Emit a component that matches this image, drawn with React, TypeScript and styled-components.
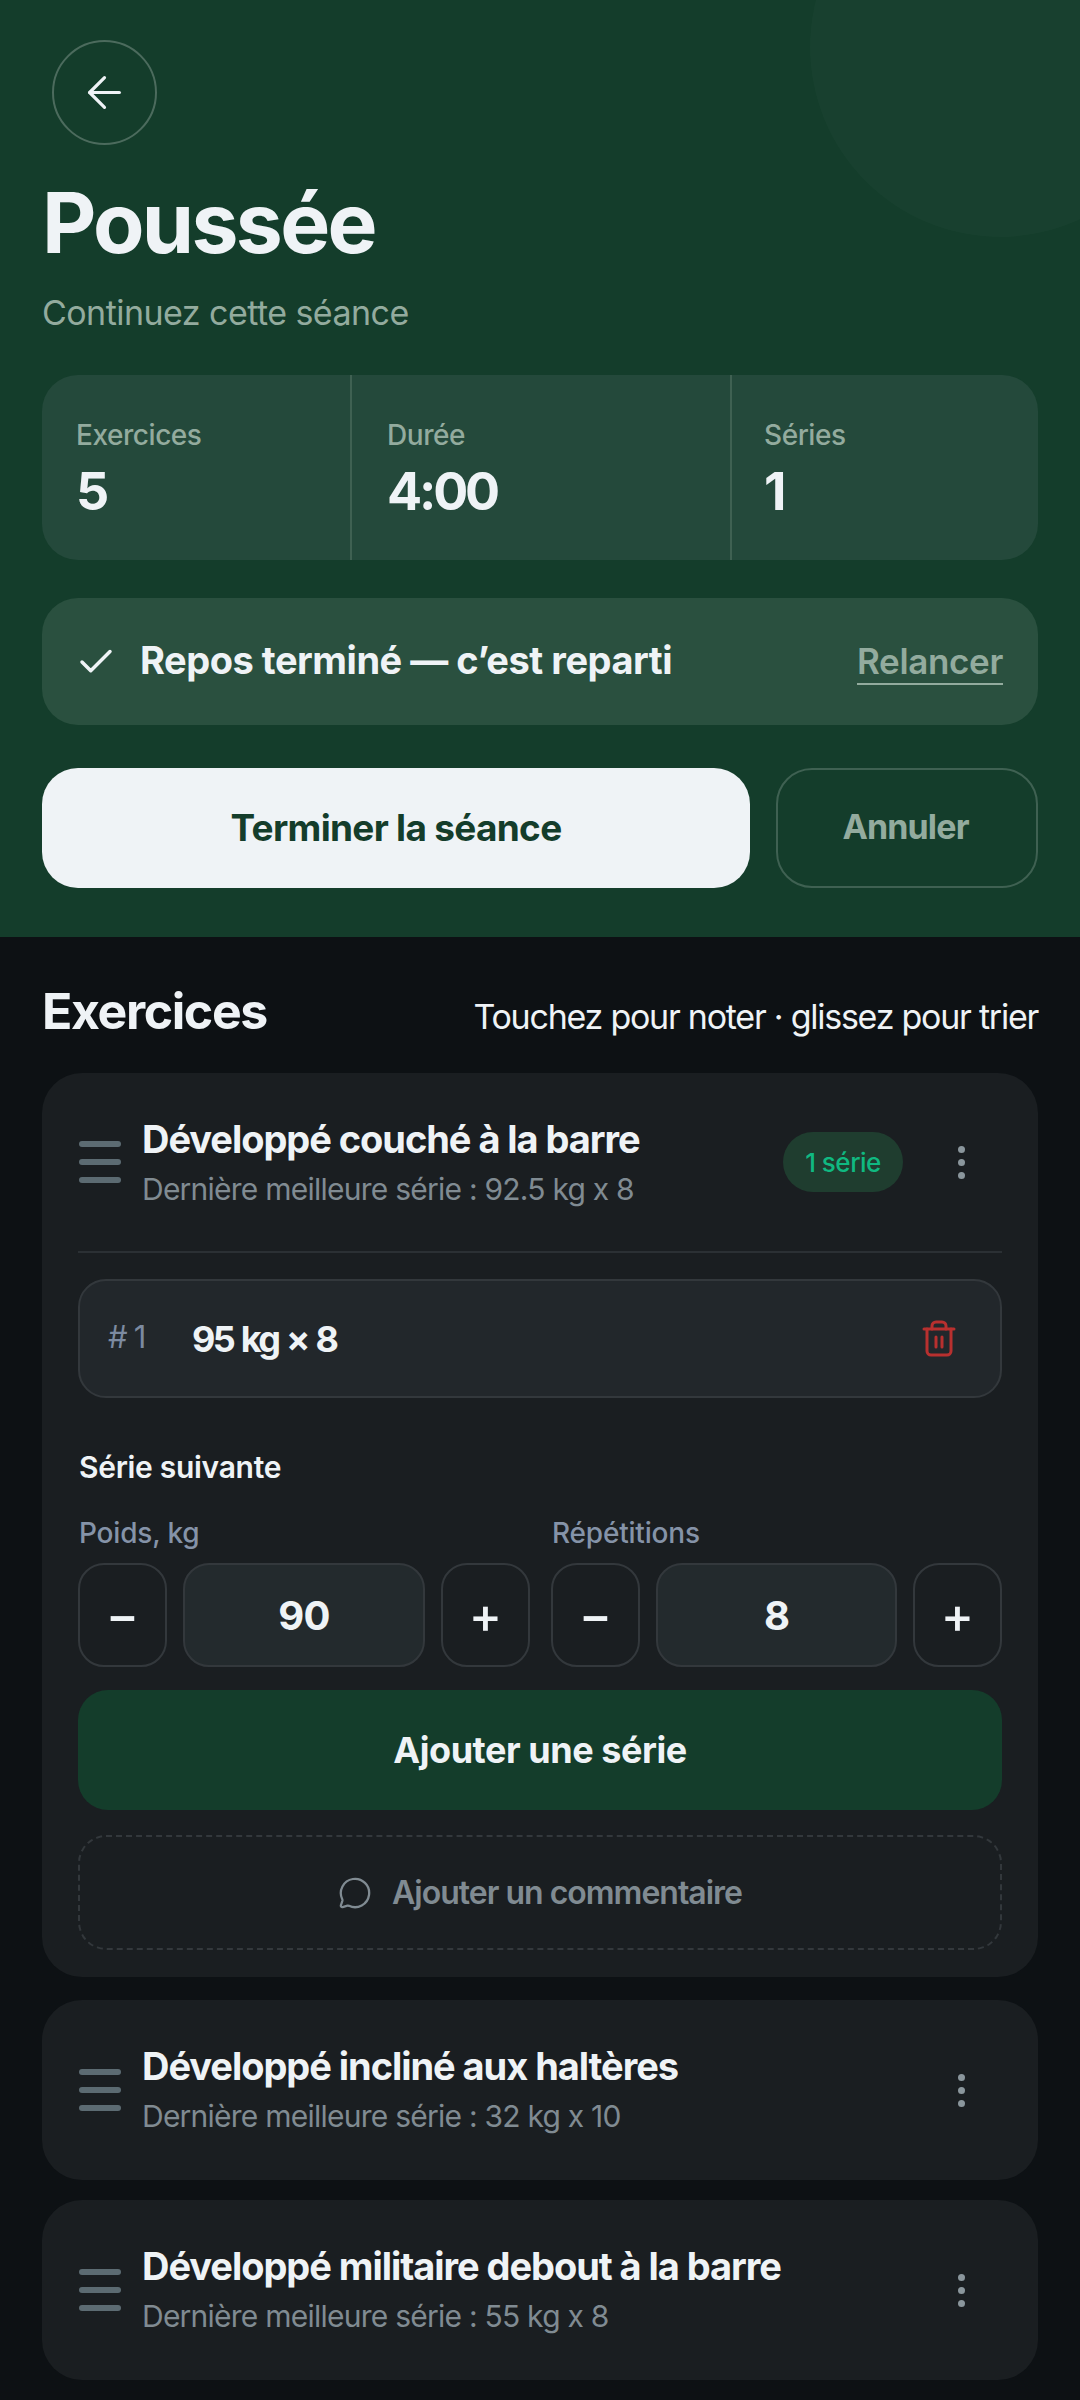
import React from "react";
import styled, { createGlobalStyle } from "styled-components";
import { ArrowLeft, Check, MessageCircle } from "lucide-react";

const Global = createGlobalStyle`
  html, body { margin: 0; padding: 0; background: #0d1114; }
  * { box-sizing: border-box; }
  body { font-family: Inter, "Noto Sans", sans-serif; width: 1080px; height: 2400px; overflow: hidden; }
`;

const Page = styled.div`
  width: 1080px;
  height: 2400px;
  overflow: hidden;
  background: #0d1114;
`;

const Hero = styled.header`
  position: relative;
  overflow: hidden;
  height: 937px;
  padding: 40px 42px 0;
  background: #143d2b;
  color: #eff3f6;
`;

const HeroCircle = styled.div`
  position: absolute;
  left: 810px;
  top: -143px;
  width: 380px;
  height: 380px;
  border-radius: 50%;
  background: rgba(255, 255, 255, 0.02);
`;

const BackButton = styled.button`
  display: flex;
  align-items: center;
  justify-content: center;
  width: 105px;
  height: 105px;
  margin-left: 10px;
  padding: 0;
  border: 2px solid rgba(255, 255, 255, 0.24);
  border-radius: 50%;
  background: transparent;
  color: #eff3f6;
`;

const Title = styled.h1`
  margin: 28px 0 0;
  font-size: 84px;
  line-height: 100px;
  font-weight: 700;
  letter-spacing: -2.7px;
`;

const Subtitle = styled.p`
  margin: 18px 0 0;
  font-size: 34px;
  line-height: 44px;
  font-weight: 400;
  letter-spacing: -0.55px;
  color: #93ab9e;
`;

const Stats = styled.section`
  display: grid;
  grid-template-columns: 308px 380px 1fr;
  height: 185px;
  margin-top: 40px;
  border-radius: 36px;
  background: #24493b;
`;

const Stat = styled.div<{ $divided?: boolean; $inset: number }>`
  padding-top: 44px;
  padding-left: ${(p) => p.$inset}px;
  border-left: ${(p) => (p.$divided ? "2px solid #3f6152" : "none")};
`;

const StatLabel = styled.div`
  font-size: 28px;
  line-height: 32px;
  font-weight: 500;
  letter-spacing: -0.45px;
  color: #93ab9e;
`;

const StatValue = styled.div`
  margin-top: 11px;
  font-size: 52px;
  line-height: 60px;
  font-weight: 700;
  letter-spacing: -3.2px;
`;

const RestBar = styled.section`
  display: flex;
  align-items: center;
  height: 127px;
  margin-top: 38px;
  padding: 0 35px;
  border-radius: 36px;
  background: #2a503f;
`;

const RestIcon = styled(Check)`
  margin-left: -2px;
  flex: none;
`;

const RestText = styled.div`
  flex: 1;
  margin-left: 23px;
  margin-top: -4px;
  font-size: 38px;
  font-weight: 700;
  letter-spacing: -0.47px;
`;

const RestLink = styled.a`
  padding-bottom: 3px;
  margin-top: 3px;
  font-size: 35px;
  line-height: 38px;
  font-weight: 600;
  letter-spacing: -0.35px;
  color: #93ab9e;
  border-bottom: 2px solid #93ab9e;
`;

const HeroActions = styled.div`
  display: flex;
  gap: 26px;
  margin-top: 43px;
`;

const FinishButton = styled.button`
  width: 708px;
  height: 120px;
  padding: 0 0 2px;
  border: none;
  border-radius: 36px;
  background: #eff3f6;
  color: #143d2b;
  font: 700 37px Inter, sans-serif;
  letter-spacing: -0.7px;
`;

const CancelButton = styled.button`
  width: 262px;
  height: 120px;
  padding: 0 3px 4px 0;
  border: 2px solid #3f6152;
  border-radius: 36px;
  background: transparent;
  color: #93ab9e;
  font: 700 34px Inter, sans-serif;
  letter-spacing: -0.85px;
`;

const Content = styled.main`
  padding: 0 42px;
`;

const SectionHead = styled.div`
  display: flex;
  align-items: center;
  justify-content: space-between;
  height: 136px;
  padding-top: 12px;
`;

const SectionTitle = styled.h2`
  margin: 0;
  font-size: 50px;
  font-weight: 700;
  letter-spacing: -1.4px;
  color: #eff3f6;
`;

const SectionHint = styled.span`
  margin-top: 10px;
  font-size: 34px;
  font-weight: 400;
  letter-spacing: -1.25px;
  color: #eff3f6;
`;

const Card = styled.article<{ $open?: boolean }>`
  height: ${(p) => (p.$open ? "904px" : "180px")};
  margin-bottom: ${(p) => (p.$open ? "23px" : "20px")};
  padding: 0 36px;
  border-radius: 40px;
  background: #1a1e21;
`;

const CardHead = styled.div<{ $open?: boolean }>`
  display: flex;
  align-items: center;
  height: ${(p) => (p.$open ? "178px" : "180px")};
`;

const Handle = styled.div`
  display: flex;
  flex-direction: column;
  gap: 12px;
  width: 42px;
  margin: 0 21px 0 1px;
  flex: none;
`;

const HandleBar = styled.span`
  display: block;
  height: 6px;
  border-radius: 3px;
  background: #5c6b72;
`;

const CardText = styled.div<{ $open?: boolean }>`
  flex: 1;
  min-width: 0;
  margin-top: ${(p) => (p.$open ? "0" : "-2px")};
`;

const CardTitle = styled.h3`
  margin: 0;
  font-size: 38px;
  line-height: 46px;
  font-weight: 700;
  letter-spacing: -1.05px;
  color: #eff3f6;
`;

const CardSub = styled.p`
  margin: 7px 0 0;
  font-size: 30px;
  line-height: 40px;
  font-weight: 400;
  letter-spacing: -0.76px;
  color: #808b92;
`;

const Pill = styled.span`
  display: flex;
  align-items: center;
  justify-content: center;
  width: 120px;
  height: 60px;
  margin-right: 55px;
  border-radius: 30px;
  background: #1f3d2f;
  color: #10b981;
  font-size: 26px;
  font-weight: 500;
  letter-spacing: -0.5px;
`;

const Dots = styled.div`
  display: flex;
  flex-direction: column;
  gap: 6px;
  width: 8px;
  margin-right: 36px;
  flex: none;
`;

const Dot = styled.span`
  display: block;
  width: 7px;
  height: 7px;
  border-radius: 50%;
  background: #8a969c;
`;

const Divider = styled.hr`
  height: 2px;
  margin: 0;
  border: none;
  background: #2b3034;
`;

const SetRow = styled.div`
  display: flex;
  align-items: center;
  height: 119px;
  margin-top: 26px;
  padding: 0 44px 0 28px;
  border: 2px solid #33383c;
  border-radius: 28px;
  background: #22272b;
`;

const SetIndex = styled.span`
  width: 84px;
  margin-top: -4px;
  font-size: 31px;
  font-weight: 400;
  letter-spacing: 6px;
  color: #7c8aa0;
`;

const SetValue = styled.span`
  flex: 1;
  font-size: 36px;
  font-weight: 700;
  letter-spacing: -2.7px;
  word-spacing: 2px;
  color: #eff3f6;
`;

const NextTitle = styled.h4`
  margin: 49px 0 0 1px;
  font-size: 30px;
  line-height: 40px;
  font-weight: 600;
  letter-spacing: -0.3px;
  color: #eff3f6;
`;

const Steppers = styled.div`
  display: grid;
  grid-template-columns: 452px 451px;
  column-gap: 21px;
  margin-top: 30px;
`;

const Field = styled.div`
  display: flex;
  flex-direction: column;
`;

const FieldLabel = styled.label`
  margin-left: 1px;
  font-size: 28px;
  line-height: 32px;
  font-weight: 500;
  letter-spacing: -0.2px;
  color: #8593a8;
`;

const StepRow = styled.div`
  display: grid;
  grid-template-columns: 89px 1fr 89px;
  column-gap: 16px;
  height: 104px;
  margin-top: 14px;
`;

const StepButton = styled.button`
  padding: 0;
  border: 2px solid #33383c;
  border-radius: 26px;
  background: transparent;
  color: #eff3f6;
  font: 500 50px Inter, sans-serif;
  line-height: 1;
`;

const StepValue = styled.div`
  display: flex;
  align-items: center;
  justify-content: center;
  border: 2px solid #33383c;
  border-radius: 26px;
  background: #232a2d;
  color: #eff3f6;
  font-size: 40px;
  font-weight: 700;
  letter-spacing: -0.8px;
`;

const AddButton = styled.button`
  display: block;
  width: 100%;
  height: 120px;
  margin-top: 23px;
  border: none;
  border-radius: 30px;
  background: #143d2b;
  color: #eff3f6;
  font: 700 36px Inter, sans-serif;
  letter-spacing: -0.45px;
`;

const CommentButton = styled.button`
  display: flex;
  align-items: center;
  justify-content: center;
  gap: 20px;
  width: 100%;
  height: 115px;
  margin-top: 25px;
  border: 2px dashed #33383c;
  border-radius: 28px;
  background: transparent;
  color: #808b92;
  font: 600 32px Inter, sans-serif;
  letter-spacing: -1px;
`;

const Trash = () => (
  <svg width="34" height="37" viewBox="0 0 34 37" fill="none" stroke="#b8302f" strokeWidth="3" strokeLinecap="round" strokeLinejoin="round">
    <path d="M2 9h30" />
    <path d="M10 9V6a4 4 0 0 1 4-4h6a4 4 0 0 1 4 4v3" />
    <path d="M5 9v22a4 4 0 0 0 4 4h16a4 4 0 0 0 4-4V9" />
    <path d="M14 17v10M20 17v10" />
  </svg>
);

const DragHandle = () => (
  <Handle>
    <HandleBar />
    <HandleBar />
    <HandleBar />
  </Handle>
);

const More = () => (
  <Dots>
    <Dot />
    <Dot />
    <Dot />
  </Dots>
);

const Stepper = ({ label, value }: { label: string; value: string }) => (
  <Field>
    <FieldLabel>{label}</FieldLabel>
    <StepRow>
      <StepButton>−</StepButton>
      <StepValue>{value}</StepValue>
      <StepButton>+</StepButton>
    </StepRow>
  </Field>
);

const closed = [
  { title: "Développé incliné aux haltères", sub: "Dernière meilleure série : 32 kg x 10" },
  { title: "Développé militaire debout à la barre", sub: "Dernière meilleure série : 55 kg x 8" },
];

export default function App() {
  return (
    <Page>
      <Global />
      <Hero>
        <HeroCircle />
        <BackButton aria-label="Retour">
          <ArrowLeft size={51} strokeWidth={1.5} />
        </BackButton>
        <Title>Poussée</Title>
        <Subtitle>Continuez cette séance</Subtitle>
        <Stats>
          <Stat $inset={34}>
            <StatLabel>Exercices</StatLabel>
            <StatValue>5</StatValue>
          </Stat>
          <Stat $divided $inset={35}>
            <StatLabel>Durée</StatLabel>
            <StatValue>4:00</StatValue>
          </Stat>
          <Stat $divided $inset={32}>
            <StatLabel>Séries</StatLabel>
            <StatValue>1</StatValue>
          </Stat>
        </Stats>
        <RestBar>
          <RestIcon size={42} strokeWidth={2} />
          <RestText>Repos terminé — c’est reparti</RestText>
          <RestLink>Relancer</RestLink>
        </RestBar>
        <HeroActions>
          <FinishButton>Terminer la séance</FinishButton>
          <CancelButton>Annuler</CancelButton>
        </HeroActions>
      </Hero>
      <Content>
        <SectionHead>
          <SectionTitle>Exercices</SectionTitle>
          <SectionHint>Touchez pour noter · glissez pour trier</SectionHint>
        </SectionHead>
        <Card $open>
          <CardHead $open>
            <DragHandle />
            <CardText $open>
              <CardTitle>Développé couché à la barre</CardTitle>
              <CardSub>Dernière meilleure série : 92.5 kg x 8</CardSub>
            </CardText>
            <Pill>1 série</Pill>
            <More />
          </CardHead>
          <Divider />
          <SetRow>
            <SetIndex>#1</SetIndex>
            <SetValue>95 kg × 8</SetValue>
            <Trash />
          </SetRow>
          <NextTitle>Série suivante</NextTitle>
          <Steppers>
            <Stepper label="Poids, kg" value="90" />
            <Stepper label="Répétitions" value="8" />
          </Steppers>
          <AddButton>Ajouter une série</AddButton>
          <CommentButton>
            <MessageCircle size={34} strokeWidth={1.6} />
            Ajouter un commentaire
          </CommentButton>
        </Card>
        {closed.map((c) => (
          <Card key={c.title}>
            <CardHead>
              <DragHandle />
              <CardText>
                <CardTitle>{c.title}</CardTitle>
                <CardSub>{c.sub}</CardSub>
              </CardText>
              <More />
            </CardHead>
          </Card>
        ))}
      </Content>
    </Page>
  );
}
